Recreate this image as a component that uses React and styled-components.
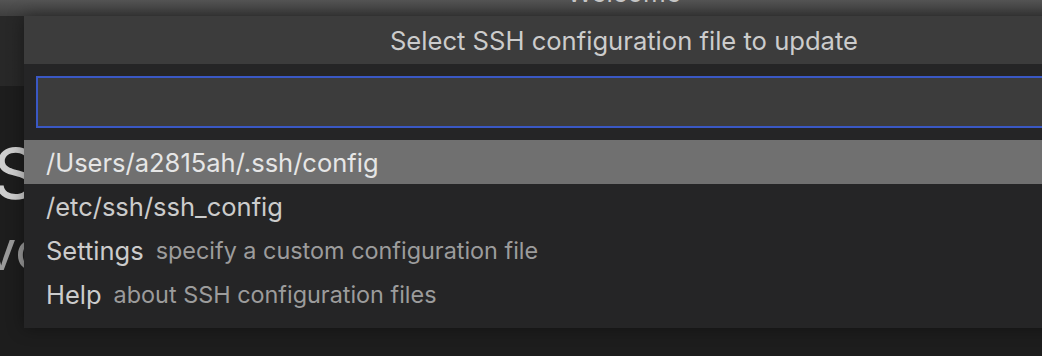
import React from 'react';
import styled, { createGlobalStyle } from 'styled-components';

const GlobalStyle = createGlobalStyle`
  html, body {
    margin: 0;
    padding: 0;
    background: #1e1e1e;
    overflow: hidden;
  }
  body {
    font-family: Inter, "Noto Sans", "Liberation Sans", sans-serif;
    -webkit-font-smoothing: antialiased;
  }
`;

const Window = styled.div`
  position: relative;
  width: 1248px;
  height: 356px;
  display: flex;
  flex-direction: column;
  overflow: hidden;
`;

const TitleBar = styled.div`
  height: 16px;
  flex-shrink: 0;
  background: linear-gradient(#545454, #3e3e3e);
  display: flex;
  justify-content: center;
  overflow: hidden;
`;

const WindowTitle = styled.span`
  font-size: 26px;
  line-height: 26px;
  margin-top: -20px;
  color: #c8c8c8;
`;

const TabStrip = styled.div`
  height: 70px;
  flex-shrink: 0;
  background: linear-gradient(90deg, #282828, #252525);
`;

const Editor = styled.div`
  flex: 1;
  background: #1d1d1d;
  padding-top: 48px;
  overflow: hidden;
`;

const Hero = styled.div`
  font-size: 70px;
  line-height: 80px;
  color: #cfcfcf;
  margin-left: -7px;
  white-space: nowrap;
`;

const Tagline = styled.div`
  font-size: 54px;
  line-height: 74px;
  color: #9a9a9a;
  margin-left: -14px;
  white-space: nowrap;
`;

const QuickPick = styled.div`
  position: absolute;
  top: 16px;
  left: 24px;
  width: 1200px;
  height: 312px;
  background: #252526;
  box-shadow: 0 0 16px rgba(0, 0, 0, 0.4);
  display: flex;
  flex-direction: column;
`;

const Header = styled.div`
  height: 48px;
  background: #3c3c3c;
  color: #cccccc;
  font-size: 25.6px;
  display: flex;
  align-items: center;
  justify-content: center;
`;

const InputWrap = styled.div`
  padding: 12px 12px;
`;

const Input = styled.div`
  height: 48px;
  background: #3c3c3c;
  border: 2px solid #3a58c4;
`;

const List = styled.div`
  display: flex;
  flex-direction: column;
`;

const Row = styled.div`
  height: 44px;
  display: flex;
  align-items: center;
  padding-left: 22px;
  background: ${(p) => (p.$active ? '#707070' : 'transparent')};
  color: ${(p) => (p.$active ? '#e6e6e6' : '#cccccc')};
  font-size: 25.5px;
  white-space: nowrap;
`;

const Description = styled.span`
  margin-left: 12px;
  font-size: 23.4px;
  color: #9c9c9c;
`;

const items = [
  { label: '/Users/a2815ah/.ssh/config', active: true },
  { label: '/etc/ssh/ssh_config' },
  { label: 'Settings', description: 'specify a custom configuration file' },
  { label: 'Help', description: 'about SSH configuration files' },
];

export default function App() {
  return (
    <>
      <GlobalStyle />
      <Window>
        <TitleBar>
          <WindowTitle>Welcome</WindowTitle>
        </TitleBar>
        <TabStrip />
        <Editor>
          <Hero>S</Hero>
          <Tagline>vo</Tagline>
        </Editor>
        <QuickPick>
          <Header>Select SSH configuration file to update</Header>
          <InputWrap>
            <Input />
          </InputWrap>
          <List>
            {items.map((item) => (
              <Row key={item.label} $active={item.active}>
                {item.label}
                {item.description && <Description>{item.description}</Description>}
              </Row>
            ))}
          </List>
        </QuickPick>
      </Window>
    </>
  );
}
